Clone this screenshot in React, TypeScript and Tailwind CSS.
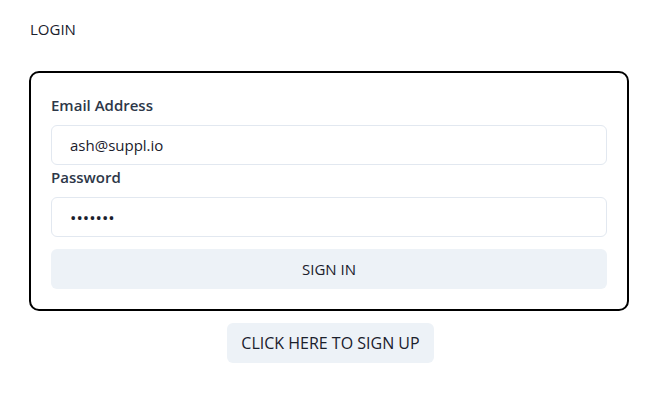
export default function App() {
  return (
    <div className="min-h-screen bg-white font-['Open_Sans',sans-serif] text-[#1a202c]">
      <div className="px-[30px] pt-[19px]">
        <h1 className="text-[15px] leading-[20px] text-[#1a202c]">LOGIN</h1>
      </div>
      <div className="ml-[29px] mt-[32px] w-[600px] rounded-[10px] border-2 border-black px-[20px] pb-[20px] pt-[21px]">
        <form className="flex flex-col">
          <label className="text-[15px] font-semibold leading-[22px] text-[#2d3748]">
            Email Address
          </label>
          <input
            className="mt-[9px] h-[40px] w-full rounded-md border border-[#e2e8f0] px-[18px] text-[15px] text-[#1a202c] outline-none"
            defaultValue="ash@suppl.io"
          />
          <label className="text-[15px] font-semibold leading-[25px] text-[#2d3748]">
            Password
          </label>
          <input
            type="password"
            className="mt-[7px] h-[40px] w-full rounded-md border border-[#e2e8f0] px-[18px] text-[17px] text-[#1a202c] outline-none"
            defaultValue="1234567"
          />
          <button
            type="button"
            className="mt-[12px] h-[40px] w-full rounded-md bg-[#edf2f7] text-[15px] font-medium text-[#1a202c]"
          >
            SIGN IN
          </button>
        </form>
      </div>
      <div className="mt-[12px] flex justify-center">
        <button
          type="button"
          className="h-[40px] rounded-md bg-[#edf2f7] px-[14px] text-[16px] font-medium text-[#1a202c]"
        >
          CLICK HERE TO SIGN UP
        </button>
      </div>
    </div>
  )
}
